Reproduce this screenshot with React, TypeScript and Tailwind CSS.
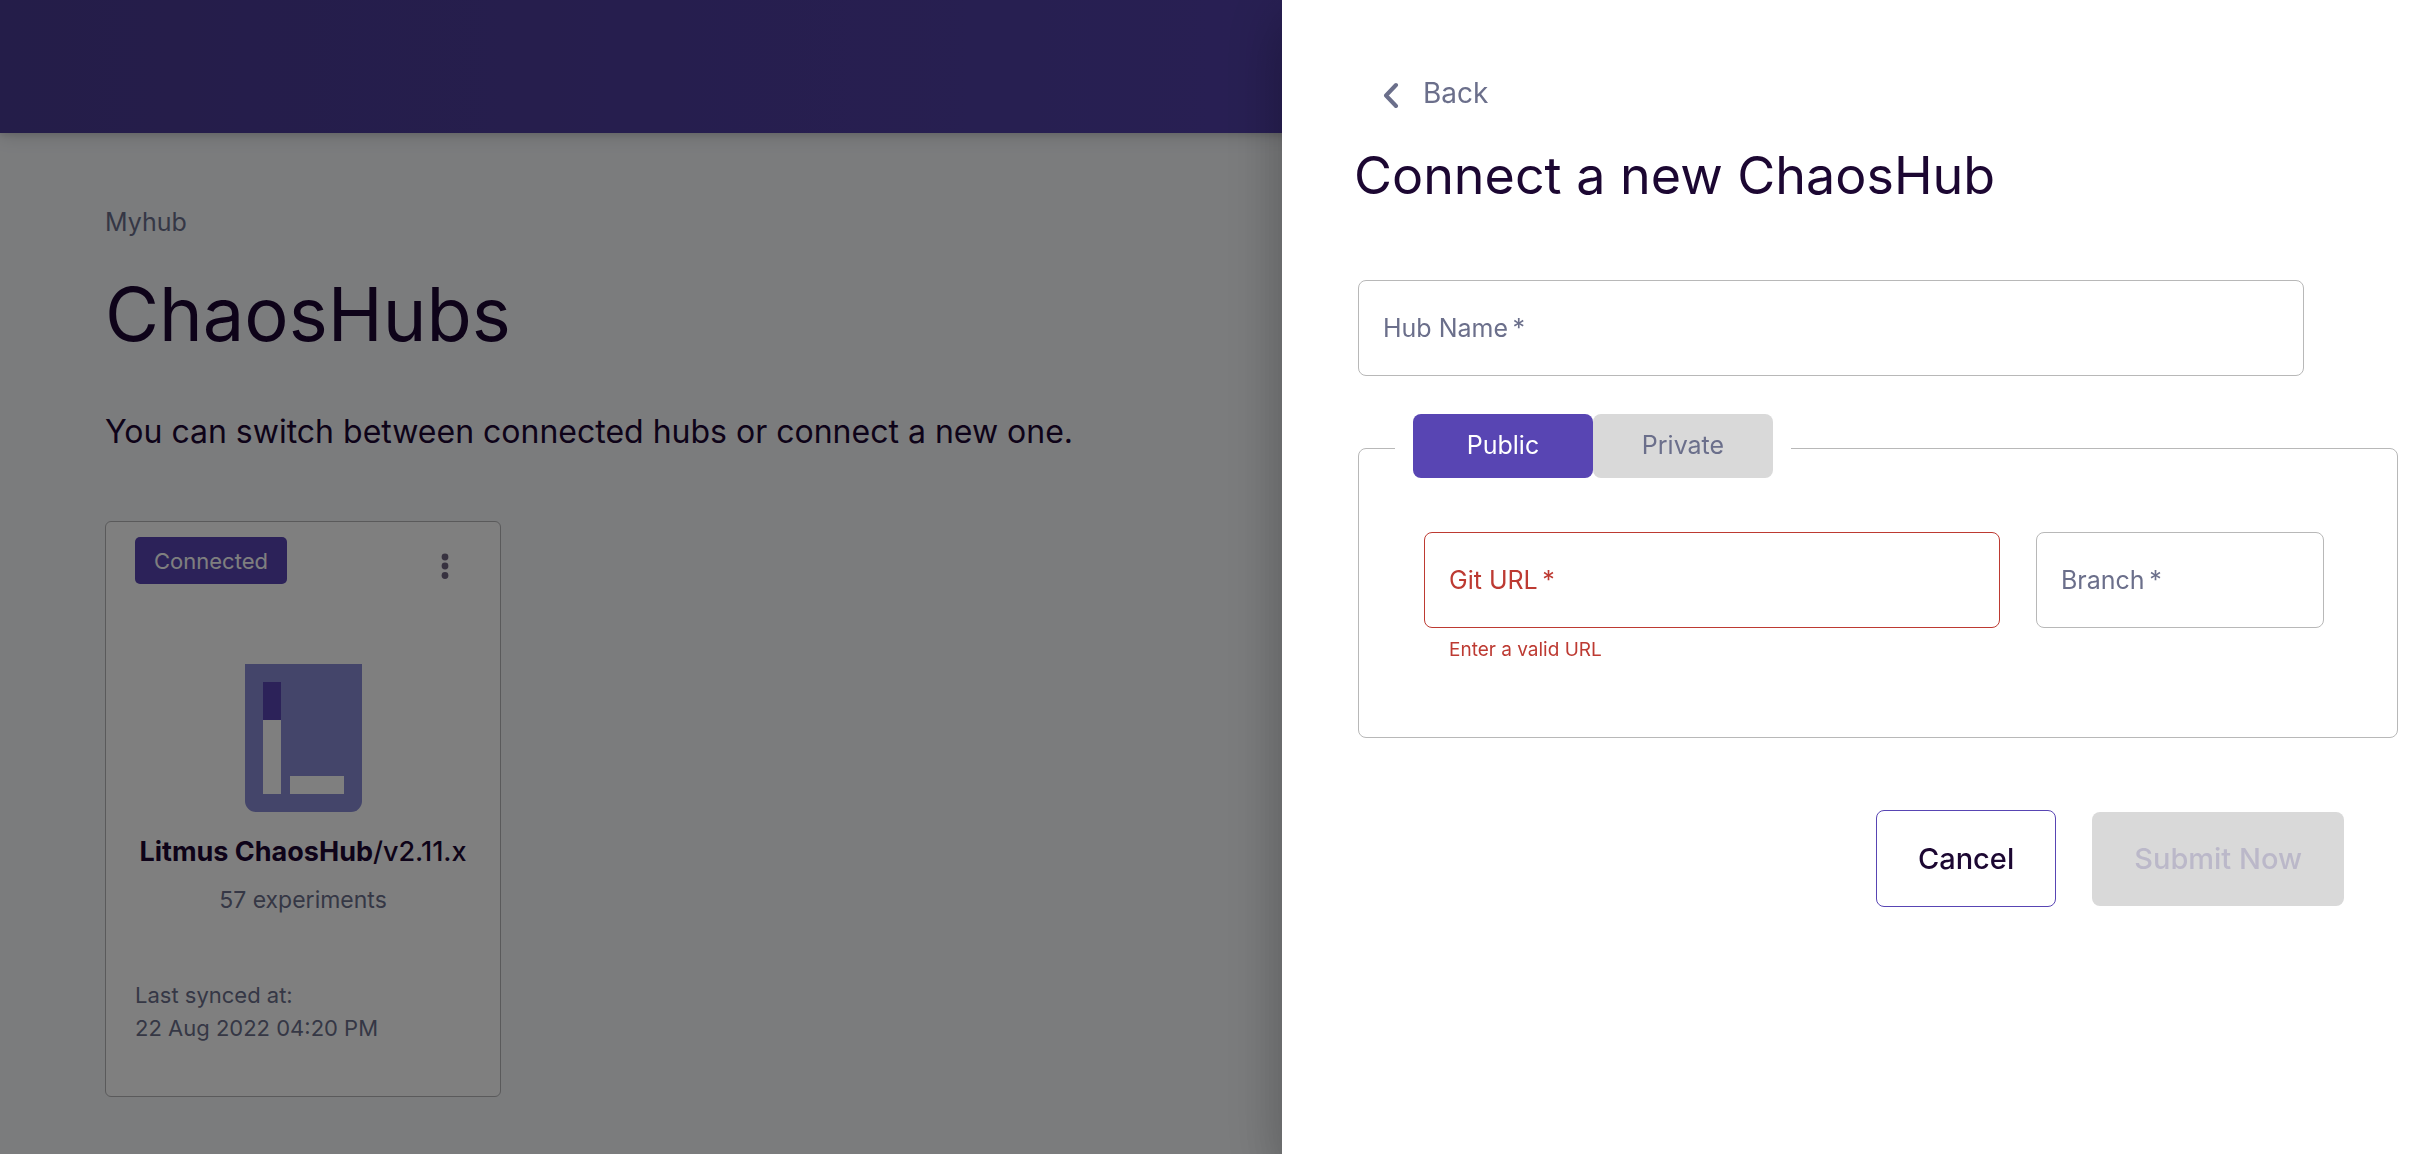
import { useId, useState } from "react";

function HubLogo() {
  return (
    <svg width="117" height="148" viewBox="0 0 117 148" aria-hidden="true">
      <path d="M0 0H117V137a11 11 0 0 1-11 11H11a11 11 0 0 1-11-11Z" fill="#888bd5" />
      <path d="M18 18H36V56H18Z" fill="#5845b3" />
      <path d="M18 56H36V130H18ZM45 112H99V130H45Z" fill="#fff" />
    </svg>
  );
}

function HubCard() {
  return (
    <article className="flex h-[576px] w-[396px] flex-col rounded-md border border-[#b4b4b6] bg-white px-[29px] pt-[15px]">
      <div className="flex items-start justify-between">
        <span className="rounded-[5px] bg-[#5845b3] px-[19px] pt-2 pb-1.5 text-[22px] leading-[33px] text-white">
          Connected
        </span>
        <button type="button" aria-label="Hub options" className="mt-3 mr-4 flex w-[20px] justify-center">
          <svg width="8" height="34" viewBox="0 0 8 34" fill="#6f6580" aria-hidden="true">
            <circle cx="4" cy="8" r="3.4" />
            <circle cx="4" cy="17" r="3.4" />
            <circle cx="4" cy="26.500" r="3.4" />
          </svg>
        </button>
      </div>
      <div className="mt-20 flex flex-col items-center">
        <HubLogo />
        <h2 className="mt-5 text-[27px] leading-10 font-medium whitespace-nowrap text-[#1c0732]">
          <strong className="font-bold">Litmus ChaosHub</strong>/v2.11.x
        </h2>
        <p className="mt-2 text-[23px] leading-10 text-[#6b6f8b]">57 experiments</p>
      </div>
      <p className="mt-[59px] text-[22px] leading-[33px] text-[#6b6f8b]">
        Last synced at:
        <br />
        22 Aug 2022 04:20 PM
      </p>
    </article>
  );
}

function Field({ label, error }: { label: string; error?: string }) {
  const id = useId();
  return (
    <div>
      <div
        className={`flex h-24 items-center rounded-lg border px-6 pt-0.5 ${
          error ? "border-[#bd3a32] text-[#bd3a32]" : "border-[#b8b8b8] text-[#6b6f8b]"
        }`}
      >
        <label htmlFor={id} className="text-[25px] whitespace-nowrap">
          {label}&thinsp;*
        </label>
        <input
          id={id}
          required
          aria-invalid={!!error}
          aria-describedby={error ? `${id}-error` : undefined}
          className="h-full min-w-0 flex-1 bg-transparent pl-2 text-[25px] text-[#1c0732] outline-none"
        />
      </div>
      {error && (
        <p id={`${id}-error`} className="mt-2 px-[25px] text-[19px] leading-7 text-[#bd3a32]">
          {error}
        </p>
      )}
    </div>
  );
}

function VisibilityTabs() {
  const [active, setActive] = useState("Public");
  return (
    <div role="tablist" className="flex">
      {["Public", "Private"].map((name) => (
        <button
          key={name}
          type="button"
          role="tab"
          aria-selected={active === name}
          onClick={() => setActive(name)}
          className={`h-16 w-[180px] rounded-lg text-[25px] ${
            active === name ? "bg-[#5845b3] text-white" : "bg-[#d9d9d9] text-[#6b6f8b]"
          }`}
        >
          {name}
        </button>
      ))}
    </div>
  );
}

function ConnectDrawer() {
  return (
    <aside
      role="dialog"
      aria-labelledby="drawer-title"
      className="w-[47.2%] bg-white pr-[30px] pl-[76px] shadow-[0_32px_48px_rgba(0,0,0,0.14),0_12px_56px_8px_rgba(0,0,0,0.14)]"
    >
      <button type="button" className="mt-[73px] ml-6 flex items-center gap-[23px] text-[28px] leading-10 text-[#6b6f8b]">
        <svg width="18" height="30" viewBox="0 0 18 30" fill="none" aria-hidden="true">
          <path d="M14 7L4 17.500L14 28" stroke="currentColor" strokeWidth="4" strokeLinecap="round" strokeLinejoin="round" />
        </svg>
        Back
      </button>
      <h1 id="drawer-title" className="mt-[33px] -ml-1 text-[52px] leading-[60px] text-[#1c0732]">
        Connect a new ChaosHub
      </h1>
      <form className="mt-[74px]">
        <div className="mr-[94px]">
          <Field label="Hub Name" />
        </div>
        <fieldset className="mt-[38px] min-w-0 rounded-lg border border-[#b8b8b8] pr-[73px] pb-[73px] pl-[65px]">
          <legend className="-ml-[29px] px-[18px] pb-1">
            <VisibilityTabs />
          </legend>
          <div className="mt-[50px] grid grid-cols-[minmax(0,2fr)_minmax(0,1fr)] items-start gap-9">
            <Field label="Git URL" error="Enter a valid URL" />
            <Field label="Branch" />
          </div>
        </fieldset>
        <div className="mt-[72px] mr-[54px] flex items-center justify-end gap-9">
          <button
            type="button"
            className="h-[97px] rounded-lg border border-[#5845b3] px-[41px] text-[29px] font-medium text-[#1c0732]"
          >
            Cancel
          </button>
          <button
            type="submit"
            disabled
            className="h-[94px] rounded-lg bg-[#d9d9d9] px-[42px] text-[29px] font-medium text-[#bbb8c9]"
          >
            Submit Now
          </button>
        </div>
      </form>
    </aside>
  );
}

export default function App() {
  return (
    <div className="relative min-h-screen bg-[#f6f8fb] font-['Inter',sans-serif]">
      <header className="relative h-[133px] bg-linear-to-r from-[#493a92] via-[#503fa6] to-[#5845b3] shadow-[0_2px_6px_rgba(0,0,0,0.1),0_2px_18px_rgba(0,0,0,0.16)]" />
      <main className="px-[105px] pt-[69px]">
        <p className="text-[25px] leading-10 text-[#6b6f8b]">Myhub</p>
        <h1 className="mt-7 text-[74px] leading-[88px] text-[#1c0732]">ChaosHubs</h1>
        <p className="mt-[49px] text-[32px] leading-[50px] text-[#1c0732]">
          You can switch between connected hubs or connect a new one.
        </p>
        <div className="mt-[64px]">
          <HubCard />
        </div>
      </main>
      <div className="fixed inset-0 flex justify-end overflow-hidden bg-black/50">
        <ConnectDrawer />
      </div>
    </div>
  );
}
